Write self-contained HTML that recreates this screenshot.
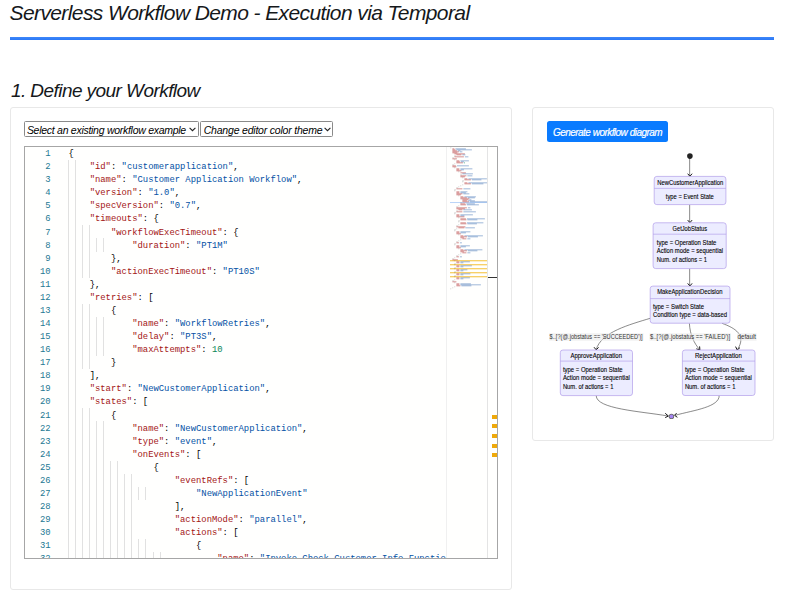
<!DOCTYPE html>
<html lang="en"><head><meta charset="utf-8"><title>Serverless Workflow Demo - Execution via Temporal</title>
<style>
html,body{margin:0;padding:0;background:#fff}
body{width:786px;height:597px;position:relative;overflow:hidden;font-family:"Liberation Sans",Arial,sans-serif;font-style:italic;color:#212529}
h1,h2{position:absolute;margin:0;font-weight:normal;white-space:nowrap;color:#15181b}
h1{left:9.5px;top:1.3px;font-size:21px;line-height:24px;letter-spacing:-0.6px}
h2{left:10.9px;top:79.8px;font-size:19px;line-height:22px;letter-spacing:-0.56px}
.rule{position:absolute;left:10px;top:37px;width:763.5px;height:3px;background:linear-gradient(#3f87f9,#2a78f7)}
.card{position:absolute;box-sizing:border-box;border:1px solid #e8e8e8;border-radius:3px;background:#fff}
.c1{left:10px;top:107px;width:502px;height:483px}
.c2{left:532px;top:107px;width:242px;height:334px}
.sel{position:absolute;box-sizing:border-box;top:121px;height:16px;border:1px solid #8a8a8a;border-radius:1.5px;background:#fff;font-size:10.5px;line-height:14px;color:#000;white-space:nowrap;padding-left:2.5px;padding-top:.8px}
.sel select{appearance:none;-webkit-appearance:none;border:0;outline:0;margin:0;padding:0;background:transparent;font:inherit;letter-spacing:inherit;color:inherit;display:block;width:100%;height:14px;line-height:14px}
.sel svg{pointer-events:none;position:absolute;right:1.3px;top:5px}
.s1{left:24px;width:174.5px;letter-spacing:-0.275px;padding-left:1.9px}
.s2{left:200.2px;width:132.8px;letter-spacing:-0.2px}
.btn{border:0;padding:0;margin:0;font-family:inherit;font-style:italic;display:block;cursor:pointer;position:absolute;left:547px;top:121px;width:121px;height:21px;border-radius:2.5px;background:#0a7bff;color:#fff;font-size:10px;line-height:23px;text-align:center;letter-spacing:-0.57px;word-spacing:.5px;white-space:nowrap;-webkit-text-stroke:.2px #fff}
.dg{position:absolute;left:532px;top:107px;font-style:normal}
.dg text{font-family:"Liberation Sans",Arial,sans-serif;font-size:6.4px;fill:#000;stroke:#000;stroke-width:.1px}
.dg .nd{fill:#ececff;stroke:#b29dea;stroke-width:.7}
.dg .dv{stroke:#b29dea;stroke-width:.65}
.dg .eg path{fill:none;stroke:#2a2a2a;stroke-width:.55}
.dg .ah path{fill:none;stroke:#000;stroke-width:.9}
.dg text.el{fill:#333;stroke:none}
.dg .lb{fill:#e8e8e8;opacity:.55}
.ed{position:absolute;left:24px;top:146px;width:472px;height:411px;border:1px solid #a6a6a6;background:#fffffe;overflow:hidden;font-family:"Liberation Mono",monospace;font-style:normal;font-size:8.862px;line-height:13.07px;color:#000}
.ed .ln{position:absolute;left:0;width:25.6px;text-align:right;color:#237893;white-space:pre}
.ed .cl{position:absolute;white-space:pre}
.ed i{position:absolute;width:1px;background:#e1e1e1}
.k{color:#a31515}.s{color:#0451a5}.n{color:#098658}.b{color:#0451a5}
.mmbg{position:absolute;left:420.7px;top:0;width:46px;height:411px;background:#fffffe;border-left:1px solid #f0f0f0}
.mmwrap{position:absolute;top:0;width:37.6px;height:411px}
.mm{position:absolute;left:0;top:0}
.ovr{position:absolute;left:462.1px;top:0;width:9.4px;height:411px;border-left:1px solid #e4e4e4;background:#fffffe}
.cur{position:absolute;left:463.1px;top:130px;width:9px;height:1.4px;background:#333}
.om{position:absolute;left:467px;width:5px;height:4px;background:#efa90a}
</style></head><body>
<h1>Serverless Workflow Demo - Execution via Temporal</h1>
<div class="rule"></div>
<h2>1. Define your Workflow</h2>
<div class="card c1"></div>
<div class="card c2"></div>
<div class="sel s1"><select><option>Select an existing workflow example</option><option>Customer Application Workflow</option></select><svg width="7" height="5" viewBox="0 0 7 5"><path d="M.6.8 3.5 3.7 6.4.8" fill="none" stroke="#222" stroke-width="1.1"/></svg></div>
<div class="sel s2"><select><option>Change editor color theme</option><option>Visual Studio</option><option>Visual Studio Dark</option><option>High Contrast Dark</option></select><svg width="7" height="5" viewBox="0 0 7 5"><path d="M.6.8 3.5 3.7 6.4.8" fill="none" stroke="#222" stroke-width="1.1"/></svg></div>
<div class="ed"><i style="left:42.90px;top:13.07px;height:405.17px"></i><i style="left:49.95px;top:13.07px;height:405.17px"></i><i style="left:57.00px;top:78.42px;height:52.28px"></i><i style="left:57.00px;top:156.84px;height:65.35px"></i><i style="left:57.00px;top:261.40px;height:156.84px"></i><i style="left:64.05px;top:78.42px;height:52.28px"></i><i style="left:64.05px;top:156.84px;height:65.35px"></i><i style="left:64.05px;top:261.40px;height:156.84px"></i><i style="left:71.10px;top:91.49px;height:13.07px"></i><i style="left:71.10px;top:169.91px;height:39.21px"></i><i style="left:71.10px;top:274.47px;height:143.77px"></i><i style="left:78.15px;top:91.49px;height:13.07px"></i><i style="left:78.15px;top:169.91px;height:39.21px"></i><i style="left:78.15px;top:274.47px;height:143.77px"></i><i style="left:85.20px;top:313.68px;height:104.56px"></i><i style="left:92.25px;top:313.68px;height:104.56px"></i><i style="left:99.30px;top:326.75px;height:91.49px"></i><i style="left:106.35px;top:326.75px;height:91.49px"></i><i style="left:113.40px;top:339.82px;height:13.07px"></i><i style="left:113.40px;top:392.10px;height:26.14px"></i><i style="left:120.45px;top:339.82px;height:13.07px"></i><i style="left:120.45px;top:392.10px;height:26.14px"></i><i style="left:127.50px;top:405.17px;height:13.07px"></i><i style="left:134.55px;top:405.17px;height:13.07px"></i><div class="ln" style="top:1.10px">1</div><div class="cl" style="top:1.10px;left:43.40px">{</div><div class="ln" style="top:14.17px">2</div><div class="cl" style="top:14.17px;left:64.67px"><span class="k">"id"</span>: <span class="s">"customerapplication"</span>,</div><div class="ln" style="top:27.24px">3</div><div class="cl" style="top:27.24px;left:64.67px"><span class="k">"name"</span>: <span class="s">"Customer Application Workflow"</span>,</div><div class="ln" style="top:40.31px">4</div><div class="cl" style="top:40.31px;left:64.67px"><span class="k">"version"</span>: <span class="s">"1.0"</span>,</div><div class="ln" style="top:53.38px">5</div><div class="cl" style="top:53.38px;left:64.67px"><span class="k">"specVersion"</span>: <span class="s">"0.7"</span>,</div><div class="ln" style="top:66.45px">6</div><div class="cl" style="top:66.45px;left:64.67px"><span class="k">"timeouts"</span>: {</div><div class="ln" style="top:79.52px">7</div><div class="cl" style="top:79.52px;left:85.94px"><span class="k">"workflowExecTimeout"</span>: {</div><div class="ln" style="top:92.59px">8</div><div class="cl" style="top:92.59px;left:107.20px"><span class="k">"duration"</span>: <span class="s">"PT1M"</span></div><div class="ln" style="top:105.66px">9</div><div class="cl" style="top:105.66px;left:85.94px">},</div><div class="ln" style="top:118.73px">10</div><div class="cl" style="top:118.73px;left:85.94px"><span class="k">"actionExecTimeout"</span>: <span class="s">"PT10S"</span></div><div class="ln" style="top:131.80px">11</div><div class="cl" style="top:131.80px;left:64.67px">},</div><div class="ln" style="top:144.87px">12</div><div class="cl" style="top:144.87px;left:64.67px"><span class="k">"retries"</span>: [</div><div class="ln" style="top:157.94px">13</div><div class="cl" style="top:157.94px;left:85.94px">{</div><div class="ln" style="top:171.01px">14</div><div class="cl" style="top:171.01px;left:107.20px"><span class="k">"name"</span>: <span class="s">"WorkflowRetries"</span>,</div><div class="ln" style="top:184.08px">15</div><div class="cl" style="top:184.08px;left:107.20px"><span class="k">"delay"</span>: <span class="s">"PT3S"</span>,</div><div class="ln" style="top:197.15px">16</div><div class="cl" style="top:197.15px;left:107.20px"><span class="k">"maxAttempts"</span>: <span class="n">10</span></div><div class="ln" style="top:210.22px">17</div><div class="cl" style="top:210.22px;left:85.94px">}</div><div class="ln" style="top:223.29px">18</div><div class="cl" style="top:223.29px;left:64.67px">],</div><div class="ln" style="top:236.36px">19</div><div class="cl" style="top:236.36px;left:64.67px"><span class="k">"start"</span>: <span class="s">"NewCustomerApplication"</span>,</div><div class="ln" style="top:249.43px">20</div><div class="cl" style="top:249.43px;left:64.67px"><span class="k">"states"</span>: [</div><div class="ln" style="top:262.50px">21</div><div class="cl" style="top:262.50px;left:85.94px">{</div><div class="ln" style="top:275.57px">22</div><div class="cl" style="top:275.57px;left:107.20px"><span class="k">"name"</span>: <span class="s">"NewCustomerApplication"</span>,</div><div class="ln" style="top:288.64px">23</div><div class="cl" style="top:288.64px;left:107.20px"><span class="k">"type"</span>: <span class="s">"event"</span>,</div><div class="ln" style="top:301.71px">24</div><div class="cl" style="top:301.71px;left:107.20px"><span class="k">"onEvents"</span>: [</div><div class="ln" style="top:314.78px">25</div><div class="cl" style="top:314.78px;left:128.47px">{</div><div class="ln" style="top:327.85px">26</div><div class="cl" style="top:327.85px;left:149.74px"><span class="k">"eventRefs"</span>: [</div><div class="ln" style="top:340.92px">27</div><div class="cl" style="top:340.92px;left:171.01px"><span class="s">"NewApplicationEvent"</span></div><div class="ln" style="top:353.99px">28</div><div class="cl" style="top:353.99px;left:149.74px">],</div><div class="ln" style="top:367.06px">29</div><div class="cl" style="top:367.06px;left:149.74px"><span class="k">"actionMode"</span>: <span class="s">"parallel"</span>,</div><div class="ln" style="top:380.13px">30</div><div class="cl" style="top:380.13px;left:149.74px"><span class="k">"actions"</span>: [</div><div class="ln" style="top:393.20px">31</div><div class="cl" style="top:393.20px;left:171.01px">{</div><div class="ln" style="top:406.27px">32</div><div class="cl" style="top:406.27px;left:192.28px"><span class="k">"name"</span>: <span class="s">"Invoke Check Customer Info Function"</span>,</div><div class="mmbg"></div><div class="mmwrap" style="left:424.9px"><svg class="mm" width="37.6" height="411" viewBox="0 0 37.6 411"><rect x="0" y="113.1" width="37.6" height="1.2" fill="#f3b91f" opacity="0.75"/><rect x="0" y="117.1" width="37.6" height="1.2" fill="#f3b91f" opacity="0.75"/><rect x="0" y="121.1" width="37.6" height="1.2" fill="#f3b91f" opacity="0.75"/><rect x="0" y="125.1" width="37.6" height="1.2" fill="#f3b91f" opacity="0.75"/><rect x="0" y="129.1" width="37.6" height="1.2" fill="#f3b91f" opacity="0.75"/><rect x="0" y="55.0" width="37.6" height="1" fill="#9cc2f5" opacity="0.7"/><rect x="0.4" y="0.3" width="0.8" height="1" fill="#444" opacity="0.3"/><rect x="2.4" y="1.3" width="2.0" height="1" fill="#b5383a" opacity="0.55"/><rect x="5.4" y="1.3" width="10.5" height="1" fill="#2a62ad" opacity="0.45"/><rect x="2.4" y="2.3" width="3.0" height="1" fill="#b5383a" opacity="0.55"/><rect x="6.4" y="2.3" width="15.5" height="1" fill="#2a62ad" opacity="0.45"/><rect x="2.4" y="3.3" width="4.5" height="1" fill="#b5383a" opacity="0.55"/><rect x="7.9" y="3.3" width="2.5" height="1" fill="#2a62ad" opacity="0.45"/><rect x="2.4" y="4.3" width="6.5" height="1" fill="#b5383a" opacity="0.55"/><rect x="9.9" y="4.3" width="2.5" height="1" fill="#2a62ad" opacity="0.45"/><rect x="2.4" y="5.3" width="5.0" height="1" fill="#b5383a" opacity="0.55"/><rect x="4.4" y="6.3" width="10.5" height="1" fill="#b5383a" opacity="0.55"/><rect x="6.4" y="7.3" width="5.0" height="1" fill="#b5383a" opacity="0.55"/><rect x="12.4" y="7.3" width="3.0" height="1" fill="#2a62ad" opacity="0.45"/><rect x="4.4" y="8.3" width="1.3" height="1" fill="#444" opacity="0.3"/><rect x="4.4" y="9.3" width="9.5" height="1" fill="#b5383a" opacity="0.55"/><rect x="14.9" y="9.3" width="3.5" height="1" fill="#2a62ad" opacity="0.45"/><rect x="2.4" y="10.3" width="1.3" height="1" fill="#444" opacity="0.3"/><rect x="2.4" y="11.3" width="4.5" height="1" fill="#b5383a" opacity="0.55"/><rect x="4.4" y="12.3" width="0.8" height="1" fill="#444" opacity="0.3"/><rect x="6.4" y="13.3" width="3.0" height="1" fill="#b5383a" opacity="0.55"/><rect x="10.4" y="13.3" width="8.5" height="1" fill="#2a62ad" opacity="0.45"/><rect x="6.4" y="14.3" width="3.5" height="1" fill="#b5383a" opacity="0.55"/><rect x="10.9" y="14.3" width="3.0" height="1" fill="#2a62ad" opacity="0.45"/><rect x="6.4" y="15.3" width="6.5" height="1" fill="#b5383a" opacity="0.55"/><rect x="13.9" y="15.3" width="1.0" height="1" fill="#098658" opacity="0.60"/><rect x="4.4" y="16.3" width="0.8" height="1" fill="#444" opacity="0.3"/><rect x="2.4" y="17.3" width="1.3" height="1" fill="#444" opacity="0.3"/><rect x="2.4" y="18.3" width="3.5" height="1" fill="#b5383a" opacity="0.55"/><rect x="6.9" y="18.3" width="12.0" height="1" fill="#2a62ad" opacity="0.45"/><rect x="2.4" y="19.3" width="4.0" height="1" fill="#b5383a" opacity="0.55"/><rect x="4.4" y="20.3" width="0.8" height="1" fill="#444" opacity="0.3"/><rect x="6.4" y="21.3" width="3.0" height="1" fill="#b5383a" opacity="0.55"/><rect x="10.4" y="21.3" width="12.0" height="1" fill="#2a62ad" opacity="0.45"/><rect x="6.4" y="22.3" width="3.0" height="1" fill="#b5383a" opacity="0.55"/><rect x="10.4" y="22.3" width="3.5" height="1" fill="#2a62ad" opacity="0.45"/><rect x="6.4" y="23.3" width="5.0" height="1" fill="#b5383a" opacity="0.55"/><rect x="8.4" y="24.3" width="0.8" height="1" fill="#444" opacity="0.3"/><rect x="10.4" y="25.3" width="5.5" height="1" fill="#b5383a" opacity="0.55"/><rect x="12.4" y="26.3" width="10.5" height="1" fill="#2a62ad" opacity="0.45"/><rect x="10.4" y="27.3" width="1.3" height="1" fill="#444" opacity="0.3"/><rect x="10.4" y="28.3" width="6.0" height="1" fill="#b5383a" opacity="0.55"/><rect x="17.4" y="28.3" width="5.0" height="1" fill="#2a62ad" opacity="0.45"/><rect x="10.4" y="29.3" width="4.5" height="1" fill="#b5383a" opacity="0.55"/><rect x="12.4" y="30.3" width="0.8" height="1" fill="#444" opacity="0.3"/><rect x="14.4" y="31.3" width="3.0" height="1" fill="#b5383a" opacity="0.55"/><rect x="18.4" y="31.3" width="18.5" height="1" fill="#2a62ad" opacity="0.45"/><rect x="14.4" y="32.3" width="6.5" height="1" fill="#b5383a" opacity="0.55"/><rect x="21.9" y="32.3" width="9.5" height="1" fill="#2a62ad" opacity="0.45"/><rect x="12.4" y="33.3" width="1.3" height="1" fill="#444" opacity="0.3"/><rect x="12.4" y="34.3" width="0.8" height="1" fill="#444" opacity="0.3"/><rect x="14.4" y="35.3" width="3.0" height="1" fill="#b5383a" opacity="0.55"/><rect x="18.4" y="35.3" width="19.2" height="1" fill="#2a62ad" opacity="0.45"/><rect x="14.4" y="36.3" width="6.5" height="1" fill="#b5383a" opacity="0.55"/><rect x="21.9" y="36.3" width="11.5" height="1" fill="#2a62ad" opacity="0.45"/><rect x="12.4" y="37.3" width="0.8" height="1" fill="#444" opacity="0.3"/><rect x="10.4" y="38.3" width="0.8" height="1" fill="#444" opacity="0.3"/><rect x="8.4" y="39.3" width="0.8" height="1" fill="#444" opacity="0.3"/><rect x="6.4" y="40.3" width="1.3" height="1" fill="#444" opacity="0.3"/><rect x="6.4" y="41.3" width="6.0" height="1" fill="#b5383a" opacity="0.55"/><rect x="13.4" y="41.3" width="7.0" height="1" fill="#2a62ad" opacity="0.45"/><rect x="4.4" y="42.3" width="1.3" height="1" fill="#444" opacity="0.3"/><rect x="4.4" y="43.3" width="0.8" height="1" fill="#444" opacity="0.3"/><rect x="6.4" y="44.3" width="3.0" height="1" fill="#b5383a" opacity="0.55"/><rect x="10.4" y="44.3" width="7.0" height="1" fill="#2a62ad" opacity="0.45"/><rect x="6.4" y="45.3" width="3.0" height="1" fill="#b5383a" opacity="0.55"/><rect x="10.4" y="45.3" width="5.5" height="1" fill="#2a62ad" opacity="0.45"/><rect x="6.4" y="46.3" width="6.0" height="1" fill="#b5383a" opacity="0.55"/><rect x="13.4" y="46.3" width="6.0" height="1" fill="#2a62ad" opacity="0.45"/><rect x="6.4" y="47.3" width="4.5" height="1" fill="#b5383a" opacity="0.55"/><rect x="8.4" y="48.3" width="0.8" height="1" fill="#444" opacity="0.3"/><rect x="10.4" y="49.3" width="3.0" height="1" fill="#b5383a" opacity="0.55"/><rect x="14.4" y="49.3" width="11.5" height="1" fill="#2a62ad" opacity="0.45"/><rect x="10.4" y="50.3" width="6.5" height="1" fill="#b5383a" opacity="0.55"/><rect x="17.9" y="50.3" width="7.0" height="1" fill="#2a62ad" opacity="0.45"/><rect x="10.4" y="51.3" width="9.0" height="1" fill="#b5383a" opacity="0.55"/><rect x="12.4" y="52.3" width="6.0" height="1" fill="#b5383a" opacity="0.55"/><rect x="19.4" y="52.3" width="2.0" height="1" fill="#2a62ad" opacity="0.45"/><rect x="12.4" y="53.3" width="4.5" height="1" fill="#b5383a" opacity="0.55"/><rect x="17.9" y="53.3" width="7.0" height="1" fill="#2a62ad" opacity="0.45"/><rect x="12.4" y="54.3" width="6.5" height="1" fill="#b5383a" opacity="0.55"/><rect x="19.9" y="54.3" width="17.7" height="1" fill="#2a62ad" opacity="0.45"/><rect x="10.4" y="55.3" width="1.3" height="1" fill="#444" opacity="0.3"/><rect x="10.4" y="56.3" width="5.0" height="1" fill="#b5383a" opacity="0.55"/><rect x="16.4" y="56.3" width="8.5" height="1" fill="#2a62ad" opacity="0.45"/><rect x="10.4" y="57.3" width="5.5" height="1" fill="#b5383a" opacity="0.55"/><rect x="16.9" y="57.3" width="12.0" height="1" fill="#2a62ad" opacity="0.45"/><rect x="8.4" y="58.3" width="0.8" height="1" fill="#444" opacity="0.3"/><rect x="6.4" y="59.3" width="1.3" height="1" fill="#444" opacity="0.3"/><rect x="6.4" y="60.3" width="10.5" height="1" fill="#b5383a" opacity="0.55"/><rect x="17.9" y="60.3" width="2.5" height="1" fill="#2a62ad" opacity="0.45"/><rect x="6.4" y="61.3" width="8.5" height="1" fill="#b5383a" opacity="0.55"/><rect x="8.4" y="62.3" width="4.0" height="1" fill="#b5383a" opacity="0.55"/><rect x="13.4" y="62.3" width="8.5" height="1" fill="#2a62ad" opacity="0.45"/><rect x="6.4" y="63.3" width="1.3" height="1" fill="#444" opacity="0.3"/><rect x="6.4" y="64.3" width="6.0" height="1" fill="#b5383a" opacity="0.55"/><rect x="13.4" y="64.3" width="12.5" height="1" fill="#2a62ad" opacity="0.45"/><rect x="4.4" y="65.3" width="1.3" height="1" fill="#444" opacity="0.3"/><rect x="4.4" y="66.3" width="0.8" height="1" fill="#444" opacity="0.3"/><rect x="6.4" y="67.3" width="3.0" height="1" fill="#b5383a" opacity="0.55"/><rect x="10.4" y="67.3" width="12.5" height="1" fill="#2a62ad" opacity="0.45"/><rect x="6.4" y="68.3" width="3.0" height="1" fill="#b5383a" opacity="0.55"/><rect x="10.4" y="68.3" width="4.0" height="1" fill="#2a62ad" opacity="0.45"/><rect x="6.4" y="69.3" width="8.0" height="1" fill="#b5383a" opacity="0.55"/><rect x="8.4" y="70.3" width="0.8" height="1" fill="#444" opacity="0.3"/><rect x="10.4" y="71.3" width="5.5" height="1" fill="#b5383a" opacity="0.55"/><rect x="16.9" y="71.3" width="18.0" height="1" fill="#2a62ad" opacity="0.45"/><rect x="10.4" y="72.3" width="6.0" height="1" fill="#b5383a" opacity="0.55"/><rect x="17.4" y="72.3" width="10.0" height="1" fill="#2a62ad" opacity="0.45"/><rect x="8.4" y="73.3" width="1.3" height="1" fill="#444" opacity="0.3"/><rect x="8.4" y="74.3" width="0.8" height="1" fill="#444" opacity="0.3"/><rect x="10.4" y="75.3" width="5.5" height="1" fill="#b5383a" opacity="0.55"/><rect x="16.9" y="75.3" width="16.5" height="1" fill="#2a62ad" opacity="0.45"/><rect x="10.4" y="76.3" width="6.0" height="1" fill="#b5383a" opacity="0.55"/><rect x="17.4" y="76.3" width="9.5" height="1" fill="#2a62ad" opacity="0.45"/><rect x="8.4" y="77.3" width="0.8" height="1" fill="#444" opacity="0.3"/><rect x="6.4" y="78.3" width="1.3" height="1" fill="#444" opacity="0.3"/><rect x="6.4" y="79.3" width="9.0" height="1" fill="#b5383a" opacity="0.55"/><rect x="8.4" y="80.3" width="6.0" height="1" fill="#b5383a" opacity="0.55"/><rect x="15.4" y="80.3" width="9.5" height="1" fill="#2a62ad" opacity="0.45"/><rect x="6.4" y="81.3" width="0.8" height="1" fill="#444" opacity="0.3"/><rect x="4.4" y="82.3" width="1.3" height="1" fill="#444" opacity="0.3"/><rect x="4.4" y="83.3" width="0.8" height="1" fill="#444" opacity="0.3"/><rect x="6.4" y="84.3" width="3.0" height="1" fill="#b5383a" opacity="0.55"/><rect x="10.4" y="84.3" width="10.0" height="1" fill="#2a62ad" opacity="0.45"/><rect x="6.4" y="85.3" width="3.0" height="1" fill="#b5383a" opacity="0.55"/><rect x="10.4" y="85.3" width="5.5" height="1" fill="#2a62ad" opacity="0.45"/><rect x="6.4" y="86.3" width="4.5" height="1" fill="#b5383a" opacity="0.55"/><rect x="8.4" y="87.3" width="0.8" height="1" fill="#444" opacity="0.3"/><rect x="10.4" y="88.3" width="3.0" height="1" fill="#b5383a" opacity="0.55"/><rect x="14.4" y="88.3" width="18.5" height="1" fill="#2a62ad" opacity="0.45"/><rect x="10.4" y="89.3" width="6.5" height="1" fill="#b5383a" opacity="0.55"/><rect x="17.9" y="89.3" width="10.0" height="1" fill="#2a62ad" opacity="0.45"/><rect x="10.4" y="90.3" width="3.5" height="1" fill="#b5383a" opacity="0.55"/><rect x="12.4" y="91.3" width="4.0" height="1" fill="#b5383a" opacity="0.55"/><rect x="17.4" y="91.3" width="3.0" height="1" fill="#2a62ad" opacity="0.45"/><rect x="10.4" y="92.3" width="0.8" height="1" fill="#444" opacity="0.3"/><rect x="8.4" y="93.3" width="0.8" height="1" fill="#444" opacity="0.3"/><rect x="6.4" y="94.3" width="1.3" height="1" fill="#444" opacity="0.3"/><rect x="6.4" y="95.3" width="2.5" height="1" fill="#b5383a" opacity="0.55"/><rect x="9.9" y="95.3" width="2.0" height="1" fill="#2a62ad" opacity="0.45"/><rect x="4.4" y="96.3" width="1.3" height="1" fill="#444" opacity="0.3"/><rect x="4.4" y="97.3" width="0.8" height="1" fill="#444" opacity="0.3"/><rect x="6.4" y="98.3" width="3.0" height="1" fill="#b5383a" opacity="0.55"/><rect x="10.4" y="98.3" width="9.5" height="1" fill="#2a62ad" opacity="0.45"/><rect x="6.4" y="99.3" width="3.0" height="1" fill="#b5383a" opacity="0.55"/><rect x="10.4" y="99.3" width="5.5" height="1" fill="#2a62ad" opacity="0.45"/><rect x="6.4" y="100.3" width="4.5" height="1" fill="#b5383a" opacity="0.55"/><rect x="8.4" y="101.3" width="0.8" height="1" fill="#444" opacity="0.3"/><rect x="10.4" y="102.3" width="3.0" height="1" fill="#b5383a" opacity="0.55"/><rect x="14.4" y="102.3" width="18.0" height="1" fill="#2a62ad" opacity="0.45"/><rect x="10.4" y="103.3" width="6.5" height="1" fill="#b5383a" opacity="0.55"/><rect x="17.9" y="103.3" width="9.5" height="1" fill="#2a62ad" opacity="0.45"/><rect x="10.4" y="104.3" width="3.5" height="1" fill="#b5383a" opacity="0.55"/><rect x="12.4" y="105.3" width="4.0" height="1" fill="#b5383a" opacity="0.55"/><rect x="17.4" y="105.3" width="3.0" height="1" fill="#2a62ad" opacity="0.45"/><rect x="10.4" y="106.3" width="0.8" height="1" fill="#444" opacity="0.3"/><rect x="8.4" y="107.3" width="0.8" height="1" fill="#444" opacity="0.3"/><rect x="6.4" y="108.3" width="1.3" height="1" fill="#444" opacity="0.3"/><rect x="6.4" y="109.3" width="2.5" height="1" fill="#b5383a" opacity="0.55"/><rect x="9.9" y="109.3" width="2.0" height="1" fill="#2a62ad" opacity="0.45"/><rect x="4.4" y="110.3" width="0.8" height="1" fill="#444" opacity="0.3"/><rect x="2.4" y="111.3" width="1.3" height="1" fill="#444" opacity="0.3"/><rect x="2.4" y="112.3" width="5.5" height="1" fill="#b5383a" opacity="0.55"/><rect x="4.4" y="113.3" width="0.8" height="1" fill="#444" opacity="0.3"/><rect x="6.4" y="114.3" width="3.0" height="1" fill="#b5383a" opacity="0.55"/><rect x="10.4" y="114.3" width="9.5" height="1" fill="#2a62ad" opacity="0.45"/><rect x="6.4" y="115.3" width="3.0" height="1" fill="#b5383a" opacity="0.55"/><rect x="10.4" y="115.3" width="3.0" height="1" fill="#2a62ad" opacity="0.45"/><rect x="4.4" y="116.3" width="1.3" height="1" fill="#444" opacity="0.3"/><rect x="4.4" y="117.3" width="0.8" height="1" fill="#444" opacity="0.3"/><rect x="6.4" y="118.3" width="3.0" height="1" fill="#b5383a" opacity="0.55"/><rect x="10.4" y="118.3" width="11.5" height="1" fill="#2a62ad" opacity="0.45"/><rect x="6.4" y="119.3" width="3.0" height="1" fill="#b5383a" opacity="0.55"/><rect x="10.4" y="119.3" width="3.0" height="1" fill="#2a62ad" opacity="0.45"/><rect x="4.4" y="120.3" width="1.3" height="1" fill="#444" opacity="0.3"/><rect x="4.4" y="121.3" width="0.8" height="1" fill="#444" opacity="0.3"/><rect x="6.4" y="122.3" width="3.0" height="1" fill="#b5383a" opacity="0.55"/><rect x="10.4" y="122.3" width="7.0" height="1" fill="#2a62ad" opacity="0.45"/><rect x="6.4" y="123.3" width="3.0" height="1" fill="#b5383a" opacity="0.55"/><rect x="10.4" y="123.3" width="3.0" height="1" fill="#2a62ad" opacity="0.45"/><rect x="4.4" y="124.3" width="1.3" height="1" fill="#444" opacity="0.3"/><rect x="4.4" y="125.3" width="0.8" height="1" fill="#444" opacity="0.3"/><rect x="6.4" y="126.3" width="3.0" height="1" fill="#b5383a" opacity="0.55"/><rect x="10.4" y="126.3" width="10.0" height="1" fill="#2a62ad" opacity="0.45"/><rect x="6.4" y="127.3" width="3.0" height="1" fill="#b5383a" opacity="0.55"/><rect x="10.4" y="127.3" width="3.0" height="1" fill="#2a62ad" opacity="0.45"/><rect x="4.4" y="128.3" width="1.3" height="1" fill="#444" opacity="0.3"/><rect x="4.4" y="129.3" width="0.8" height="1" fill="#444" opacity="0.3"/><rect x="6.4" y="130.3" width="3.0" height="1" fill="#b5383a" opacity="0.55"/><rect x="10.4" y="130.3" width="9.5" height="1" fill="#2a62ad" opacity="0.45"/><rect x="6.4" y="131.3" width="3.0" height="1" fill="#b5383a" opacity="0.55"/><rect x="10.4" y="131.3" width="3.0" height="1" fill="#2a62ad" opacity="0.45"/><rect x="4.4" y="132.3" width="0.8" height="1" fill="#444" opacity="0.3"/><rect x="2.4" y="133.3" width="1.3" height="1" fill="#444" opacity="0.3"/><rect x="2.4" y="134.3" width="4.0" height="1" fill="#b5383a" opacity="0.55"/><rect x="4.4" y="135.3" width="0.8" height="1" fill="#444" opacity="0.3"/><rect x="6.4" y="136.3" width="3.0" height="1" fill="#b5383a" opacity="0.55"/><rect x="10.4" y="136.3" width="10.5" height="1" fill="#2a62ad" opacity="0.45"/><rect x="6.4" y="137.3" width="3.0" height="1" fill="#b5383a" opacity="0.55"/><rect x="10.4" y="137.3" width="20.5" height="1" fill="#2a62ad" opacity="0.45"/><rect x="6.4" y="138.3" width="4.0" height="1" fill="#b5383a" opacity="0.55"/><rect x="11.4" y="138.3" width="10.0" height="1" fill="#2a62ad" opacity="0.45"/><rect x="4.4" y="139.3" width="0.8" height="1" fill="#444" opacity="0.3"/><rect x="2.4" y="140.3" width="0.8" height="1" fill="#444" opacity="0.3"/><rect x="0.4" y="141.3" width="0.8" height="1" fill="#444" opacity="0.3"/></svg></div><div class="ovr"></div><div class="cur"></div><div class="om" style="top:268.0px"></div><div class="om" style="top:277.4px"></div><div class="om" style="top:287.0px"></div><div class="om" style="top:296.5px"></div><div class="om" style="top:306.0px"></div></div>
<button type="button" class="btn">Generate workflow diagram</button>
<svg class="dg" width="242" height="334" viewBox="532 107 242 334"><g class="eg"><path d="M689.65,158.5 L689.65,176"/><path d="M689.65,204.7 L689.65,222.5"/><path d="M689.65,268.5 L689.65,285.8"/><path d="M650.2,318.3 C630,324.5 601,332 596.2,349.6"/><path d="M689.4,323.3 C690,335 694,343 699.6,349.6"/><path d="M722,323.3 C735,328 747,335 737.4,349.6"/><path d="M596.2,395.6 C596.2,409 640,411.2 668,416"/><path d="M719.2,395.5 C719.2,407 695,410 675,415.3"/></g><g class="ah"><path d="M687.7,173.7 L689.9,176.3 L692.1,173.7"/><path d="M687.7,220.1 L689.9,222.7 L692.1,220.1"/><path d="M687.7,283.4 L689.9,286.0 L692.1,283.4"/><path d="M594,347.2 L596.2,349.8 L598.6,347.4"/><path d="M696.3,348.8 L699.9,350 L699.6,346.4"/><path d="M735.6,346.6 L737.2,350 L740,347.6"/><path d="M665.2,413.3 L668.4,416 L665.2,417.6"/><path d="M676.6,413.1 L674.5,415.3 L677.4,417.3"/></g><circle cx="689.9" cy="156.1" r="2.8" fill="#222"/><circle cx="671.45" cy="416.4" r="2.7" fill="#6a6a6a"/><circle cx="671.45" cy="416.4" r="1.85" fill="#a585f2"/><rect x="549" y="333.2" width="94.5" height="7.6" class="lb"/><rect x="649.5" y="333.2" width="81.5" height="7.6" class="lb"/><rect x="737" y="333.2" width="19.6" height="7.6" class="lb"/><text class="el" x="549.6" y="339" textLength="93" lengthAdjust="spacingAndGlyphs">$..[?(@.jobstatus == 'SUCCEEDED')]</text><text class="el" x="650.1" y="339" textLength="80" lengthAdjust="spacingAndGlyphs">$..[?(@.jobstatus == 'FAILED')]</text><text class="el" x="737.6" y="339" textLength="18.4" lengthAdjust="spacingAndGlyphs">default</text><rect x="654.2" y="176.4" width="71.7" height="28.2" rx="2.6" class="nd"/><line x1="654.2" y1="188.4" x2="725.9" y2="188.4" class="dv"/><text x="657.2" y="185.0" textLength="66.1" lengthAdjust="spacingAndGlyphs">NewCustomerApplication</text><text x="665.8" y="198.6" textLength="48.0" lengthAdjust="spacingAndGlyphs">type = Event State</text><rect x="653.1" y="222.8" width="73.1" height="45.8" rx="2.6" class="nd"/><line x1="653.1" y1="234.2" x2="726.2" y2="234.2" class="dv"/><text x="672.6" y="230.8" textLength="34.4" lengthAdjust="spacingAndGlyphs">GetJobStatus</text><text x="656.8" y="244.7" textLength="59.6" lengthAdjust="spacingAndGlyphs">type = Operation State</text><text x="656.8" y="253.4" textLength="66.3" lengthAdjust="spacingAndGlyphs">Action mode = sequential</text><text x="656.8" y="262.2" textLength="50.2" lengthAdjust="spacingAndGlyphs">Num. of actions = 1</text><rect x="650.2" y="286.1" width="79.8" height="37.1" rx="2.6" class="nd"/><line x1="650.2" y1="298.6" x2="730.0" y2="298.6" class="dv"/><text x="657.2" y="294.4" textLength="65.2" lengthAdjust="spacingAndGlyphs">MakeApplicationDecision</text><text x="652.9" y="308.5" textLength="51.1" lengthAdjust="spacingAndGlyphs">type = Switch State</text><text x="652.9" y="316.9" textLength="74.1" lengthAdjust="spacingAndGlyphs">Condition type = data-based</text><rect x="560.3" y="350.0" width="72.2" height="45.6" rx="2.6" class="nd"/><line x1="560.3" y1="361.1" x2="632.5" y2="361.1" class="dv"/><text x="570.4" y="357.9" textLength="51.6" lengthAdjust="spacingAndGlyphs">ApproveApplication</text><text x="562.9" y="371.9" textLength="59.7" lengthAdjust="spacingAndGlyphs">type = Operation State</text><text x="562.9" y="380.4" textLength="66.9" lengthAdjust="spacingAndGlyphs">Action mode = sequential</text><text x="562.9" y="389.2" textLength="50.5" lengthAdjust="spacingAndGlyphs">Num. of actions = 1</text><rect x="682.4" y="350.0" width="72.6" height="45.5" rx="2.6" class="nd"/><line x1="682.4" y1="361.1" x2="755.0" y2="361.1" class="dv"/><text x="694.9" y="357.9" textLength="46.9" lengthAdjust="spacingAndGlyphs">RejectApplication</text><text x="684.9" y="371.9" textLength="59.7" lengthAdjust="spacingAndGlyphs">type = Operation State</text><text x="684.9" y="380.4" textLength="66.9" lengthAdjust="spacingAndGlyphs">Action mode = sequential</text><text x="684.9" y="389.2" textLength="50.5" lengthAdjust="spacingAndGlyphs">Num. of actions = 1</text></svg>
</body></html>
